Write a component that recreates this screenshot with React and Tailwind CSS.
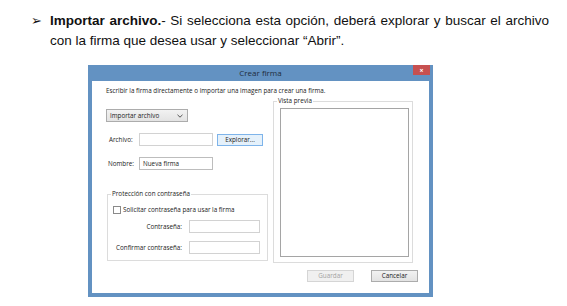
export default function App() {
  return (
    <div className="w-[567px] h-[306px] bg-white overflow-hidden" style={{ fontFamily: '"Liberation Sans", Arial, sans-serif' }}>
      {/* Paragraph */}
      <div className="flex pt-[11px] pl-[31px] text-[#111]">
        <span className="w-[19px] text-[13px] leading-[20px]" style={{ fontFamily: '"DejaVu Sans", sans-serif' }}>➢</span>
        <p className="w-[499px] text-[13.5px] leading-[20px] text-justify [text-align-last:left]">
          <b>Importar archivo.</b>- Si selecciona esta opción, deberá explorar y buscar el archivo con la firma que desea usar y seleccionar “Abrir”.
        </p>
      </div>

      {/* Dialog window */}
      <div className="ml-[88px] mt-[14px] w-[345px] h-[232px] bg-[#6392c2] flex flex-col px-[4px] pb-[4px]" style={{ fontFamily: '"Open Sans", "Noto Sans", sans-serif' }}>
        <div className="relative h-[16px] flex items-center justify-center text-[8px] text-[#1e2c3a]">
          Crear firma
          <div className="absolute right-[-1px] top-0 w-[17px] h-[10px] bg-[#c75050] flex items-center justify-center text-white text-[7px] leading-none font-bold">×</div>
        </div>

        <div className="flex-1 bg-white flex flex-col text-[6.3px] text-[#222]">
          <div className="pl-[14px] pt-[5px] leading-[10px]">Escribir la firma directamente o importar una imagen para crear una firma.</div>

          <div className="flex mt-[5px]">
            {/* Left column */}
            <div className="ml-[14px] w-[162px] flex flex-col">
              <div className="mt-[8px] w-[82px] h-[13px] border border-[#acacac] bg-gradient-to-b from-[#f2f2f2] to-[#e3e3e3] flex items-center justify-between pl-[3px] pr-[4px]">
                <span>Importar archivo</span>
                <svg width="6" height="4" viewBox="0 0 6 4"><path d="M0.5 0.8 L3 3.2 L5.5 0.8" fill="none" stroke="#444" strokeWidth="0.9" /></svg>
              </div>

              <div className="mt-[11px] flex items-center h-[13px]">
                <span className="w-[33px] pl-[3px]">Archivo:</span>
                <div className="w-[74px] h-[13px] border border-[#d2d2d2]" />
                <div className="ml-[4px] w-[46px] h-[12px] border border-[#7eb4ea] bg-[#e5f1fb] flex items-center justify-center">Explorar...</div>
              </div>

              <div className="mt-[11px] flex items-center h-[13px]">
                <span className="w-[33px] pl-[2px]">Nombre:</span>
                <div className="w-[74px] h-[13px] border border-[#bdbdbd] flex items-center pl-[3px]">Nueva firma</div>
              </div>

              <div className="relative mt-[24px] ml-[1px] w-[161px] h-[67px] border border-[#dcdcdc] flex flex-col">
                <span className="absolute left-[3px] top-[-6px] bg-white px-[1px] leading-[10px]">Protección con contraseña</span>
                <div className="mt-[10px] ml-[5px] flex items-center gap-[2px]">
                  <div className="w-[8px] h-[8px] border border-[#8a8a8a] bg-white" />
                  <span>Solicitar contraseña para usar la firma</span>
                </div>
                <div className="mt-[6px] flex items-center h-[13px]">
                  <span className="w-[74px] text-right">Contraseña:</span>
                  <div className="ml-[7px] w-[71px] h-[13px] border border-[#d2d2d2]" />
                </div>
                <div className="mt-[8px] flex items-center h-[13px]">
                  <span className="w-[74px] text-right">Confirmar contraseña:</span>
                  <div className="ml-[7px] w-[71px] h-[13px] border border-[#d2d2d2]" />
                </div>
              </div>
            </div>

            {/* Preview group */}
            <div className="relative ml-[5px] w-[140px] h-[162px] border border-[#dcdcdc] pl-[6px] pr-[3px] pt-[6px] pb-[5px]">
              <span className="absolute left-[3px] top-[-6px] bg-white px-[1px] leading-[10px]">Vista previa</span>
              <div className="w-full h-full border border-[#a5a5a5] bg-white" />
            </div>
          </div>

          <div className="mt-[7px] flex justify-end gap-[17px] pr-[11px]">
            <div className="w-[47px] h-[12px] border border-[#d5d5d5] bg-[#f0f0f0] text-[#a3a3a3] flex items-center justify-center">Guardar</div>
            <div className="w-[47px] h-[12px] border border-[#acacac] bg-gradient-to-b from-[#f2f2f2] to-[#e3e3e3] flex items-center justify-center">Cancelar</div>
          </div>
        </div>
      </div>
    </div>
  )
}
